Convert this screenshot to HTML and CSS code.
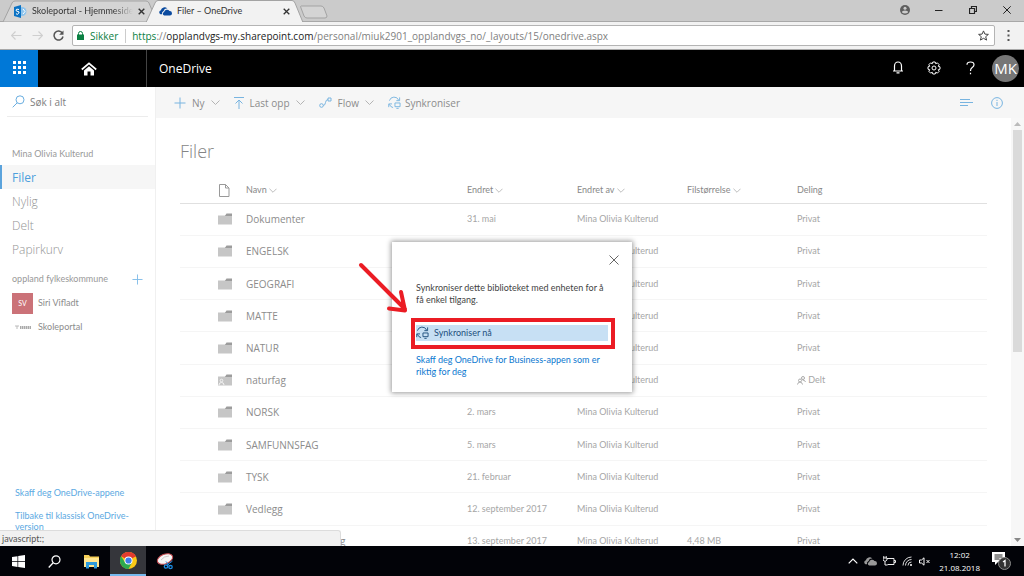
FILE: index.html
```
<!DOCTYPE html>
<html lang="no">
<head>
<meta charset="utf-8">
<title>Filer – OneDrive</title>
<link rel="stylesheet" href="styles.css">
</head>
<body>
<svg class="defs" aria-hidden="true">
  <symbol id="chev" viewBox="0 0 9 5"><path d="M.5.5l4 4 4-4" fill="none" stroke="currentColor"/></symbol>
  <symbol id="folder" viewBox="0 0 14 12"><path d="M0 2.500h7L8.500 1H14v10.500H0z" fill="#c6c6c6"/><path d="M7 3l1.500-2.500H14V3z" fill="#9c9c9c"/></symbol>
  <symbol id="plus" viewBox="0 0 12 12"><path d="M6 .5v11M.5 6h11" stroke="currentColor" fill="none"/></symbol>
  <symbol id="sync" viewBox="0 0 14 14"><path d="M1.500 5A5.300 5.300 0 0 1 11.500 4.500M12.500 1.500v3.500H9M5.500 12.500A5.500 5.500 0 0 1 1.500 9M.8 12V8.500h3.500M7.500 7.500h5.500v4H7.500zM9 13.300h2.500" stroke="currentColor" fill="none"/></symbol>
  <symbol id="cloud" viewBox="0 0 14 10"><path d="M1.500 8.500A2.300 2.300 0 0 1 2 4.200 4 4 0 0 1 9 2.500 3.500 3.500 0 0 0 5 5 3 3 0 0 0 3.300 8.500z" fill="currentColor"/><path d="M5.500 9.800A2 2 0 0 1 5.500 6 3.200 3.200 0 0 1 11.300 5 2.400 2.400 0 0 1 11.800 9.800z" fill="currentColor"/></symbol>
</svg>

<header class="tabs">
  <svg class="tab-shapes" viewBox="0 0 340 22" width="340" height="22" aria-hidden="true">
    <path d="M3 22L12 3Q13 1 15 1H146Q148 1 149 3L157 22z" fill="#d4d4d4" stroke="#a3a3a3"/>
    <path d="M301 6h20q2 0 3 2l3 8q0 2-2 2h-18q-2 0-3-2l-3-8q-1-2 0-2z" fill="#d4d4d4" stroke="#a3a3a3"/>
    <path d="M146 22.500L155 3Q156 .5 158 .5H292Q294 .5 295 3L303 22.500z" fill="#f2f2f2" stroke="#a3a3a3"/>
  </svg>
  <div class="tab tab-first">
    <svg width="13" height="13" viewBox="0 0 13 13"><circle cx="8" cy="6.500" r="4.500" fill="#8fc4ec"/><path d="M0 2l7-2v13l-7-2z" fill="#0a72c4"/><path d="M5 4.500Q2 3.500 2 5t2 1.500T4.500 8.500 2 8.500" stroke="#fff" fill="none"/><path d="M9 4l2 2.500L9 9" stroke="#fff" fill="none"/></svg>
    <span class="tab-title faded">Skoleportal - Hjemmeside</span>
    <button class="x" aria-label="Lukk fane"><svg width="7" height="7" viewBox="0 0 7 7"><path d="M.7.7l5.600 5.600M6.300.7L.7 6.300" stroke="#333" stroke-width="1.400"/></svg></button>
  </div>
  <div class="tab tab-second">
    <svg width="13" height="10" class="navy"><use href="#cloud"/></svg>
    <span class="tab-title">Filer – OneDrive</span>
    <button class="x" aria-label="Lukk fane"><svg width="7" height="7" viewBox="0 0 7 7"><path d="M.7.7l5.600 5.600M6.300.7L.7 6.300" stroke="#333" stroke-width="1.300"/></svg></button>
  </div>
  <div class="window-buttons">
    <button aria-label="Profil"><svg width="10" height="10" viewBox="0 0 10 10"><circle cx="5" cy="5" r="5" fill="#5f5f5f"/><circle cx="5" cy="3.300" r="1.500" fill="#ccc"/><path d="M2 7.500Q2 5.600 5 5.600T8 7.500Q5 9.500 2 7.500z" fill="#ccc"/></svg></button>
    <button aria-label="Minimer"><svg width="8" height="8" viewBox="0 0 8 8"><path d="M0 4.500h7.500" stroke="#222"/></svg></button>
    <button aria-label="Gjenopprett"><svg width="8" height="8" viewBox="0 0 8 8"><path d="M.5 2.500h5v5h-5zM2.500 2.500v-2h5v5h-2" fill="none" stroke="#222" stroke-width="1.200"/></svg></button>
    <button aria-label="Lukk"><svg width="8" height="8" viewBox="0 0 8 8"><path d="M.3.3l7.400 7.400M7.700.3L.3 7.700" stroke="#222"/></svg></button>
  </div>
</header>

<div class="toolbar">
  <button aria-label="Tilbake"><svg width="11" height="9" viewBox="0 0 11 9"><path d="M4.500.5l-4 4 4 4M.5 4.500h10" fill="none" stroke="#cfcfcf" stroke-width="1.200"/></svg></button>
  <button aria-label="Frem"><svg width="11" height="9" viewBox="0 0 11 9"><path d="M6.500.5l4 4-4 4M10.500 4.500H.5" fill="none" stroke="#cfcfcf" stroke-width="1.200"/></svg></button>
  <button aria-label="Last inn på nytt"><svg width="11" height="11" viewBox="0 0 11 11"><path d="M9.300 3A4.500 4.500 0 1 0 10 6.500" fill="none" stroke="#555" stroke-width="1.500"/><path d="M10.500.5v4.300H6.200z" fill="#555"/></svg></button>
  <div class="address">
    <svg width="7" height="9" viewBox="0 0 7 9"><path d="M0 3.500h7V9H0z" fill="#0b8043"/><path d="M1.500 4V2.500a2 2 0 0 1 4 0V4" fill="none" stroke="#0b8043"/></svg>
    <span class="secure">Sikker</span>
    <span class="url"><b>https</b>://<i>opplandvgs-my.sharepoint.com</i>/personal/miuk2901_opplandvgs_no/_layouts/15/onedrive.aspx</span>
    <svg width="11" height="11" viewBox="0 0 11 11"><path d="M5.500.9l1.400 3.200 3.500.3-2.700 2.300.9 3.400-3.100-1.800-3.100 1.800.9-3.400L.6 4.400l3.500-.3z" fill="none" stroke="#444"/></svg>
  </div>
  <button class="menu" aria-label="Meny"><svg width="3" height="11" viewBox="0 0 3 11"><path d="M.5 1h2M.5 5.500h2M.5 10h2" stroke="#555" stroke-width="2"/></svg></button>
</div>

<nav class="suite">
  <button class="waffle" aria-label="Apper"><svg width="13" height="13" viewBox="0 0 13 13"><path d="M0 1.500h13M0 6.500h13M0 11.500h13" stroke="#fff" stroke-width="3" stroke-dasharray="3 2"/></svg></button>
  <button class="home" aria-label="Hjem"><svg width="16" height="14" viewBox="0 0 16 14"><path d="M.8 7.500L8 1.300l7.200 6.200" fill="none" stroke="#fff" stroke-width="1.700"/><path d="M3 8.500l5-4.200L13 8.500v5H9.500v-4h-3v4H3z" fill="#fff"/></svg></button>
  <a class="brand" href="#">OneDrive</a>
  <button aria-label="Varsler"><svg width="12" height="13" viewBox="0 0 12 13"><path d="M1 10h10M2.500 10V5a3.500 4 0 0 1 7 0v5M4.500 11.800h3" fill="none" stroke="#fff" stroke-width="1.200"/></svg></button>
  <button aria-label="Innstillinger"><svg width="14" height="14" viewBox="0 0 14 14"><path d="M5.800 1h2.400l.5 1.700 1.700-.8 1.700 1.700-.8 1.700 1.700.5v2.400l-1.700.5.8 1.700-1.700 1.700-1.700-.8-.5 1.700H5.800l-.5-1.700-1.700.8-1.700-1.700.8-1.700L1 8.200V5.800l1.700-.5-.8-1.700 1.700-1.700 1.700.8z" fill="none" stroke="#fff"/><circle cx="7" cy="7" r="2" fill="none" stroke="#fff"/></svg></button>
  <button aria-label="Hjelp"><svg width="9" height="14" viewBox="0 0 9 14"><path d="M1 3.800Q1 1 4.500 1T8 3.800Q8 5.300 6.200 6.600T4.500 10M4.500 11.800v1.500" fill="none" stroke="#fff" stroke-width="1.200"/></svg></button>
  <button class="avatar">MK</button>
</nav>

<div class="app">
  <aside class="side">
    <label class="search"><svg width="13" height="13" viewBox="0 0 13 13"><circle cx="8" cy="4.800" r="4" fill="none" stroke="#6aaee0"/><path d="M5.200 7.800L.7 12.300" stroke="#6aaee0"/></svg><input type="text" aria-label="Søk" placeholder="Søk i alt"></label>
    <p class="owner">Mina Olivia Kulterud</p>
    <nav class="links">
      <a class="on" href="#">Filer</a>
      <a href="#">Nylig</a>
      <a href="#">Delt</a>
      <a href="#">Papirkurv</a>
    </nav>
    <div class="group"><span>oppland fylkeskommune</span><button aria-label="Legg til"><svg width="11" height="11"><use href="#plus"/></svg></button></div>
    <a class="site" href="#"><span class="sv">SV</span>Siri Vifladt</a>
    <a class="site" href="#"><span class="logo"><svg width="18" height="5" viewBox="0 0 18 5"><path d="M1 1h4M3 1v3" stroke="#bbb"/><path d="M6 2.500h11" stroke="#aaa" stroke-width="3" stroke-dasharray="1.500 .5"/></svg></span>Skoleportal</a>
    <div class="foot"><a href="#">Skaff deg OneDrive-appene</a><a href="#">Tilbake til klassisk OneDrive-versjon</a></div>
  </aside>

  <div class="main">
    <div class="commands">
      <button><svg class="blue" width="12" height="12"><use href="#plus"/></svg>Ny<svg class="chev" width="9" height="5"><use href="#chev"/></svg></button>
      <button><svg class="blue" width="10" height="12" viewBox="0 0 10 12"><path d="M0 .5h10M5 12V3M1.500 6.500L5 3l3.500 3.500" fill="none" stroke="currentColor"/></svg>Last opp<svg class="chev" width="9" height="5"><use href="#chev"/></svg></button>
      <button><svg class="blue" width="13" height="12" viewBox="0 0 13 12"><circle cx="2.500" cy="8.500" r="1.800" fill="none" stroke="currentColor"/><path d="M4.300 8.500Q6 8.500 6.500 5.500T9 2.500M9 1h3v3H9z" fill="none" stroke="currentColor"/></svg>Flow<svg class="chev" width="9" height="5"><use href="#chev"/></svg></button>
      <button class="tight"><svg class="blue" width="13" height="13"><use href="#sync"/></svg>Synkroniser</button>
      <button class="end" aria-label="Visning"><svg class="blue" width="13" height="9" viewBox="0 0 13 9"><path d="M0 1.500h10M0 4.500h13M0 7.500h8" stroke="currentColor"/></svg></button>
      <button aria-label="Informasjon"><svg class="blue" width="12" height="12" viewBox="0 0 12 12"><circle cx="6" cy="6" r="5.400" fill="none" stroke="currentColor"/><path d="M6 2.800v1.200M6 5v4" stroke="currentColor"/></svg></button>
    </div>
    <div class="scroll">
      <div class="files">
        <h1>Filer</h1>
        <table>
          <colgroup><col class="c-icon"><col class="c-name"><col class="c-mid"><col class="c-mid"><col class="c-mid"><col></colgroup>
          <thead><tr>
            <th class="ic"><svg width="11" height="13" viewBox="0 0 11 13"><path d="M.5.5h6l3.500 3.500v8.500H.5zM6.500.5V4H10" fill="none" stroke="#999"/></svg></th>
            <th>Navn <svg class="chev" width="8" height="5"><use href="#chev"/></svg></th>
            <th>Endret <svg class="chev" width="8" height="5"><use href="#chev"/></svg></th>
            <th>Endret av <svg class="chev" width="8" height="5"><use href="#chev"/></svg></th>
            <th>Filstørrelse <svg class="chev" width="8" height="5"><use href="#chev"/></svg></th>
            <th>Deling</th>
          </tr></thead>
          <tbody>
            <tr><td class="ic"><svg width="14" height="12"><use href="#folder"/></svg></td><td class="nm">Dokumenter</td><td>31. mai</td><td>Mina Olivia Kulterud</td><td></td><td>Privat</td></tr>
            <tr><td class="ic"><svg width="14" height="12"><use href="#folder"/></svg></td><td class="nm">ENGELSK</td><td></td><td>Mina Olivia Kulterud</td><td></td><td>Privat</td></tr>
            <tr><td class="ic"><svg width="14" height="12"><use href="#folder"/></svg></td><td class="nm">GEOGRAFI</td><td></td><td>Mina Olivia Kulterud</td><td></td><td>Privat</td></tr>
            <tr><td class="ic"><svg width="14" height="12"><use href="#folder"/></svg></td><td class="nm">MATTE</td><td></td><td>Mina Olivia Kulterud</td><td></td><td>Privat</td></tr>
            <tr><td class="ic"><svg width="14" height="12"><use href="#folder"/></svg></td><td class="nm">NATUR</td><td></td><td>Mina Olivia Kulterud</td><td></td><td>Privat</td></tr>
            <tr><td class="ic"><svg width="14" height="12" viewBox="0 0 14 12"><use href="#folder" width="14" height="12"/><circle cx="3.500" cy="6.500" r="1.300" fill="none" stroke="#f4f4f4"/><path d="M1 11q0-2.500 2.500-2.500T6 11" fill="none" stroke="#f4f4f4"/></svg></td><td class="nm">naturfag</td><td></td><td>Mina Olivia Kulterud</td><td></td><td><svg class="people" width="9" height="9" viewBox="0 0 9 9"><circle cx="3" cy="4.500" r="1.500"/><circle cx="6" cy="2" r="1.500"/><path d="M.5 8.500Q1 6 3 6t2.500 2.500M5.500 4Q8 4 8.500 6"/></svg> Delt</td></tr>
            <tr><td class="ic"><svg width="14" height="12"><use href="#folder"/></svg></td><td class="nm">NORSK</td><td>2. mars</td><td>Mina Olivia Kulterud</td><td></td><td>Privat</td></tr>
            <tr><td class="ic"><svg width="14" height="12"><use href="#folder"/></svg></td><td class="nm">SAMFUNNSFAG</td><td>5. mars</td><td>Mina Olivia Kulterud</td><td></td><td>Privat</td></tr>
            <tr><td class="ic"><svg width="14" height="12"><use href="#folder"/></svg></td><td class="nm">TYSK</td><td>21. februar</td><td>Mina Olivia Kulterud</td><td></td><td>Privat</td></tr>
            <tr><td class="ic"><svg width="14" height="12"><use href="#folder"/></svg></td><td class="nm">Vedlegg</td><td>12. september 2017</td><td>Mina Olivia Kulterud</td><td></td><td>Privat</td></tr>
            <tr><td class="ic"></td><td class="nm cut">g</td><td>13. september 2017</td><td>Mina Olivia Kulterud</td><td>4,48 MB</td><td>Privat</td></tr>
          </tbody>
        </table>
      </div>
      <div class="bar" aria-hidden="true"><svg width="7" height="4" viewBox="0 0 7 4"><path d="M0 4l3.500-4L7 4z" fill="#bbb"/></svg><div class="track"><div class="thumb"></div></div><svg width="7" height="4" viewBox="0 0 7 4"><path d="M0 0l3.500 4L7 0z" fill="#888"/></svg></div>
    </div>
  </div>

  <div class="overlay">
    <div class="dialog" role="dialog" aria-label="Synkroniser">
      <button class="close" aria-label="Lukk"><svg width="10" height="10" viewBox="0 0 10 10"><path d="M.5.5l9 9M9.500.5l-9 9" stroke="#666"/></svg></button>
      <p>Synkroniser dette biblioteket med enheten for å få enkel tilgang.</p>
      <div class="pick">
        <button class="sync"><svg width="13" height="13"><use href="#sync"/></svg>Synkroniser nå</button>
        <span class="frame"></span>
        <svg class="arrow" width="52" height="52" viewBox="0 0 52 52" aria-hidden="true"><path d="M3 3L47 47M31 46.500L47 48.500L43 30" fill="none" stroke="#eb1c24" stroke-width="4" stroke-linecap="round" stroke-linejoin="round"/></svg>
      </div>
      <a href="#">Skaff deg OneDrive for Business-appen som er riktig for deg</a>
    </div>
  </div>
  <div class="status">javascript:;</div>
</div>

<footer class="taskbar">
  <button aria-label="Start"><svg width="13" height="13" viewBox="0 0 13 13"><path d="M0 2l5.500-.8v5H0zM6.200 1L13 0v6.200H6.200zM0 6.900h5.500v5L0 11zM6.200 6.900H13V13l-6.800-1z" fill="#fff"/></svg></button>
  <button aria-label="Søk"><svg width="13" height="13" viewBox="0 0 13 13"><circle cx="8" cy="4.800" r="4" fill="none" stroke="#fff" stroke-width="1.200"/><path d="M5.200 7.800L.7 12.500" stroke="#fff" stroke-width="1.300"/></svg></button>
  <button class="wide" aria-label="Filutforsker"><svg width="17" height="15" viewBox="0 0 17 15"><path d="M1 1h5l1 1.500h9V13H1z" fill="#f6cf57"/><path d="M1 4h15v9H1z" fill="#ffe68f"/><path d="M3 14.500V8h11v6.500h-3V11H6v3.500z" fill="#2c9bdc"/></svg></button>
  <button class="wide active" aria-label="Chrome"><svg width="17" height="17" viewBox="0 0 17 17"><circle cx="8.500" cy="8.500" r="8.500" fill="#fbc916"/><path d="M8.500 8.500L1.100 4.250A8.500 8.500 0 0 1 15.900 4.250z" fill="#e33b2e"/><path d="M1.100 4.250A8.500 8.500 0 0 0 8.500 17L12 10.500 8.500 8.500 5 10.300z" fill="#2da94f"/><path d="M8.500 4.500h7.500l-.1-.25H8z" fill="#e33b2e"/><circle cx="8.500" cy="8.500" r="4" fill="#fff"/><circle cx="8.500" cy="8.500" r="3.100" fill="#3e7de8"/></svg></button>
  <button class="wide" aria-label="Utklippsverktøy"><svg width="18" height="17" viewBox="0 0 18 17"><ellipse cx="9" cy="6" rx="8" ry="4.800" transform="rotate(-22 9 6)" fill="#f5f5f5" stroke="#c44a4f"/><path d="M5 7q3-4 8-4" stroke="#c9c9c9" fill="none"/><path d="M16.500 8l-6 4.500M10 8.500l4 5" stroke="#1d8be0"/><circle cx="10" cy="13.500" r="1.700" fill="none" stroke="#1d8be0" stroke-width="1.300"/><circle cx="14.500" cy="14" r="1.700" fill="none" stroke="#1d8be0" stroke-width="1.300"/></svg></button>
  <div class="tray">
    <svg width="10" height="6" viewBox="0 0 10 6"><path d="M.7 5.300L5 1l4.300 4.300" fill="none" stroke="#fff" stroke-width="1.200"/></svg>
    <svg class="grey" width="13" height="10"><use href="#cloud"/></svg>
    <svg width="13" height="10" viewBox="0 0 13 10"><path d="M4 2.500h7v6H4.500M11 4.500h1.500v2H11M.8 0v2M3.200 0v2M0 2h4v2L2 5.500 0 4zM2 5.500V9h2.500" fill="none" stroke="#eee"/></svg>
    <svg width="11" height="10" viewBox="0 0 11 10"><path d="M1 9.500A8.500 8.500 0 0 1 9.500 1M3.500 9.500a6 6 0 0 1 6-6M6 9.500A3.500 3.500 0 0 1 9.500 6" fill="none" stroke="#ddd"/><circle cx="9" cy="9" r="1" fill="#fff"/></svg>
    <svg width="12" height="9" viewBox="0 0 12 9"><path d="M.5 3h2L5 .8v7.400L2.500 6h-2zM7.500 3l3 3M10.500 3l-3 3" fill="none" stroke="#fff"/></svg>
    <div class="clock"><time>12:02</time><time>21.08.2018</time></div>
    <svg width="20" height="20" viewBox="0 0 20 20"><path d="M0 1h13v10H6l-3 3v-3H0z" fill="#fff"/><path d="M2.500 4h8M2.500 6h8M2.500 8h5" stroke="#222"/><circle cx="12.500" cy="12.500" r="6" fill="#333" stroke="#8a8a8a"/><path d="M11 11l2-1.500v6" fill="none" stroke="#fff" stroke-width="1.300"/></svg>
  </div>
</footer>
</body>
</html>
```
FILE: styles.css
```
* { box-sizing: border-box; }
html, body { height: 100%; }
body {
  margin: 0;
  display: flex;
  flex-direction: column;
  overflow: hidden;
  background: #fff;
  color: #8c8c8c;
  font: 9px/12px Lato, "Open Sans", sans-serif;
}
button { padding: 0; border: 0; background: none; color: inherit; font: inherit; display: flex; align-items: center; justify-content: center; }
a { color: inherit; text-decoration: none; }
svg { display: block; flex: none; }
.defs { position: absolute; width: 0; height: 0; }
h1, p { margin: 0; font-weight: 400; }

/* browser frame */
.tabs { position: relative; flex: none; display: flex; height: 22px; background: #cbcbcb; border-bottom: 1px solid #a8a8a8; color: #333; }
.tab-shapes { position: absolute; left: 0; top: 0; }
.tab { position: relative; display: flex; align-items: center; gap: 5px; height: 22px; }
.tab-first { width: 145px; padding-left: 14px; }
.tab-second { width: 145px; padding-left: 14px; }
.tab-title { flex: 1; overflow: hidden; white-space: nowrap; }
.faded { -webkit-mask-image: linear-gradient(to right, #000 80%, transparent); mask-image: linear-gradient(to right, #000 80%, transparent); }
.window-buttons { display: flex; align-items: center; margin-left: auto; height: 20px; }
.window-buttons button { width: 34px; height: 20px; }
.toolbar { flex: none; display: flex; align-items: center; gap: 10px; height: 28px; padding: 0 14px 0 11px; background: #f2f2f2; border-bottom: 1px solid #a8a8a8; }
.address { flex: 1; display: flex; align-items: center; height: 21px; padding: 0 5px 0 4px; margin-right: 2px; margin-left: -2px; background: #fff; border: 1px solid #b4b4b4; border-radius: 2px; font: 10px/14px "Open Sans", sans-serif; }
.secure { margin: 0 6px; padding-right: 7px; border-right: 1px solid #ccc; color: #0b8043; }
.url { flex: 1; white-space: nowrap; color: #808080; }
.url b { font-weight: 400; color: #0b8043; }
.url i { font-style: normal; color: #222; }

/* suite bar */
.suite { flex: none; display: flex; align-items: center; height: 37px; background: #000; color: #fff; }
.suite button { width: 36px; height: 37px; padding-bottom: 2px; }
.suite .waffle { width: 38px; background: #0078d7; }
.suite .home { width: 102px; padding-bottom: 0; }
.brand { flex: 1; display: flex; align-items: center; align-self: stretch; margin-left: 6px; padding-left: 12px; border-left: 1px solid #444; font: 12px/16px "Open Sans", sans-serif; }
.suite .avatar { width: 27px; height: 27px; margin: 0 5px 0 4px; border-radius: 50%; background: #767676; font: 15px/20px "Open Sans", sans-serif; }

/* application */
.app { position: relative; flex: 1; min-height: 0; display: flex; }
.side { flex: none; display: flex; flex-direction: column; width: 156px; border-right: 1px solid #f0f0f0; }
.search { display: flex; align-items: center; gap: 5px; height: 30px; margin: 0 7px; padding-left: 5px; border-bottom: 1px solid #ececec; }
.search input { width: 100px; padding: 1px 0 0; border: 0; outline: 0; background: none; font: 10px/14px "Open Sans", sans-serif; }
.search input::placeholder { color: #808080; opacity: 1; }
.owner { margin: 31px 12px 5px; color: #999; }
.links a { display: block; height: 24px; padding: 1px 0 0 12px; color: #949494; font: 300 12px/24px "Open Sans", sans-serif; }
.links .on { padding-left: 10px; border-left: 2px solid #5ba3dc; background: #f6f6f6; color: #4d9fdd; font-weight: 400; }
.group { display: flex; align-items: center; justify-content: space-between; height: 24px; margin: 6px 12px 0; color: #999; }
.group button { color: #7fbbe8; }
.site { display: flex; align-items: center; gap: 5px; height: 24px; margin: 0 12px; }
.sv, .logo { display: flex; align-items: center; justify-content: center; width: 21px; height: 21px; }
.sv { background: #cb7278; color: #fff; font-size: 7px; }
.foot { display: grid; gap: 12px; margin: auto 16px 14px 15px; color: #5ba9e2; line-height: 11px; }

.main { flex: 1; min-width: 0; display: flex; flex-direction: column; }
.commands { flex: none; display: flex; align-items: center; gap: 14px; height: 31px; padding: 0 21px 0 18px; background: #f6f6f6; font: 10px/14px "Open Sans", sans-serif; }
.commands button { gap: 6px; }
.commands .tight { gap: 4px; }
.commands .end { margin-left: auto; margin-right: 4px; }
.blue { color: #78b4e0; }
.chev { color: #b4b4b4; }
.scroll { flex: 1; min-height: 0; display: flex; overflow: hidden; }
.files { flex: 1; padding: 19px 24px 0 24px; }
h1 { margin-bottom: 11px; font: 300 18px/28px "Open Sans", sans-serif; color: #858585; }
table { width: 100%; height: 382px; table-layout: fixed; border-collapse: collapse; }
.c-icon { width: 66px; }
.c-name { width: 221px; }
.c-mid { width: 110px; }
th, td { padding: 0; text-align: left; font-weight: 400; white-space: nowrap; }
th { height: 27px; padding-top: 2px; border-bottom: 1px solid #e0e0e0; color: #888; }
td { border-bottom: 1px solid #f5f5f5; color: #a6a6a6; }
th .chev, .people { display: inline-block; vertical-align: middle; }
.people { fill: none; stroke: #aaa; }
.ic { padding-left: 38px; }
th.ic { padding-left: 39px; }
.nm { color: #8c8c8c; font: 10px/14px "Open Sans", sans-serif; }
.cut { padding-left: 94px; }
.bar { flex: none; display: flex; flex-direction: column; align-items: center; gap: 4px; width: 13px; padding: 4px 0; background: #f7f7f7; }
.track { flex: 1; width: 9px; }
.thumb { height: 55%; background: #dadada; }

.overlay { position: absolute; inset: 0; display: flex; align-items: center; justify-content: center; }
.dialog { width: 240px; padding: 13px 24px 14px; background: #fff; box-shadow: 0 0 5px 1px rgba(0, 0, 0, .4); color: #444; }
.close { width: 10px; height: 10px; margin: 0 -11px 17px auto; }
.pick { position: relative; margin: 19px 0 13px; }
.sync { justify-content: flex-start; gap: 5px; width: 100%; height: 16px; background: #c7e0f4; color: #1d4f7c; }
.frame { position: absolute; inset: -7px -7px -8px -5px; border: 4px solid #eb1c24; }
.arrow { position: absolute; left: -58px; top: -63px; }
.dialog a { display: block; color: #0b78d0; }
.status { position: absolute; left: 0; bottom: 0; width: 341px; height: 16px; padding: 2px 2px; border: 1px solid #dcdcdc; border-width: 1px 1px 0 0; border-radius: 0 3px 0 0; background: #f1f1f1; color: #555; }

/* taskbar */
.taskbar { flex: none; display: flex; align-items: stretch; height: 30px; background: #020308; color: #fff; }
.taskbar button { width: 36px; }
.taskbar .wide { width: 38px; }
.taskbar .active { width: 36px; background: #35363b; border-bottom: 2px solid #76b9ed; }
.tray { display: flex; align-items: center; gap: 6px; margin-left: auto; padding-right: 12px; }
.grey { color: #999; }
.navy { color: #0b4ba0; }
.clock { display: grid; margin: 0 6px 0 2px; text-align: center; font: 8px/13px "Open Sans", sans-serif; }
```
